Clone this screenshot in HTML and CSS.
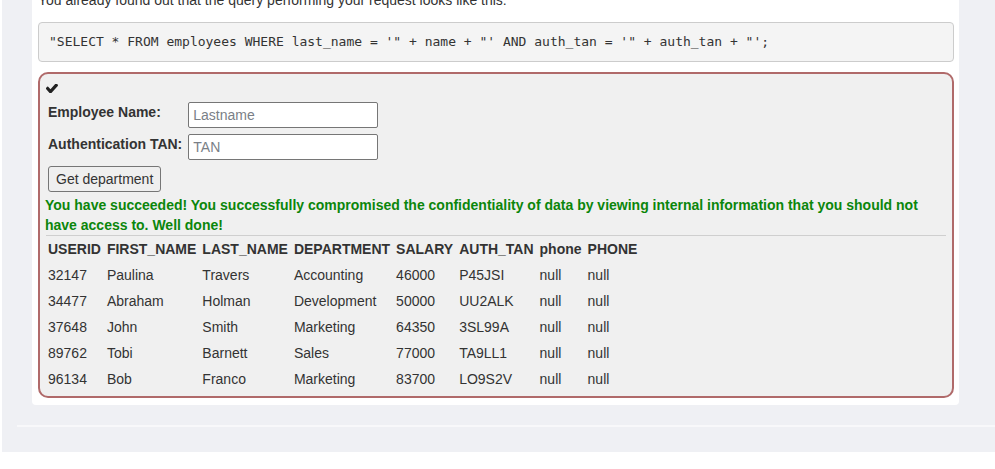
FILE: index.html
```html
<!DOCTYPE html>
<html lang="en">
<head>
<meta charset="utf-8">
<title>SQL Injection</title>
<link rel="stylesheet" href="styles.css">
</head>
<body>
<div class="page">
  <div class="card">
    <p class="intro">You already found out that the query performing your request looks like this:</p>
    <pre class="query">"SELECT * FROM employees WHERE last_name = '" + name + "' AND auth_tan = '" + auth_tan + "';</pre>
    <div class="attack">
      <div class="status">
        <svg class="check" viewBox="143 420 1528 1016" preserveAspectRatio="none" aria-hidden="true"><path d="M1671 566q0 40-28 68l-724 724-136 136q-28 28-68 28t-68-28l-136-136-362-362q-28-28-28-68t28-68l136-136q28-28 68-28t68 28l294 295 656-657q28-28 68-28t68 28l136 136q28 28 28 68z"/></svg>
      </div>
      <table class="form">
        <tr>
          <td class="label">Employee Name:</td>
          <td><input class="field" type="text" placeholder="Lastname"></td>
        </tr>
        <tr>
          <td class="label">Authentication TAN:</td>
          <td><input class="field" type="text" placeholder="TAN"></td>
        </tr>
        <tr>
          <td colspan="2"><button class="btn" type="button">Get department</button></td>
        </tr>
      </table>
      <div class="msg">You have succeeded! You successfully compromised the confidentiality of data by viewing internal information that you should not have access to. Well done!</div>
      <hr class="rule">
      <table class="results">
        <tr><th>USERID</th><th>FIRST_NAME</th><th>LAST_NAME</th><th>DEPARTMENT</th><th>SALARY</th><th>AUTH_TAN</th><th>phone</th><th>PHONE</th></tr>
        <tr><td>32147</td><td>Paulina</td><td>Travers</td><td>Accounting</td><td>46000</td><td>P45JSI</td><td>null</td><td>null</td></tr>
        <tr><td>34477</td><td>Abraham</td><td>Holman</td><td>Development</td><td>50000</td><td>UU2ALK</td><td>null</td><td>null</td></tr>
        <tr><td>37648</td><td>John</td><td>Smith</td><td>Marketing</td><td>64350</td><td>3SL99A</td><td>null</td><td>null</td></tr>
        <tr><td>89762</td><td>Tobi</td><td>Barnett</td><td>Sales</td><td>77000</td><td>TA9LL1</td><td>null</td><td>null</td></tr>
        <tr><td>96134</td><td>Bob</td><td>Franco</td><td>Marketing</td><td>83700</td><td>LO9S2V</td><td>null</td><td>null</td></tr>
      </table>
    </div>
  </div>
  <div class="footer-line"></div>
</div>
</body>
</html>
```
FILE: styles.css
```css
html, body {
  margin: 0;
  padding: 0;
  background: #ffffff;
}
body {
  font-family: "Liberation Sans", Arial, sans-serif;
  font-size: 14px;
  line-height: 20px;
  color: #333333;
  overflow: hidden;
}
.page {
  margin-left: 2px;
  height: 452px;
  background: #eff0f4;
  overflow: hidden;
}
.card {
  margin: -10px 0 20px 30px;
  width: 927px;
  box-sizing: border-box;
  padding: 0 5px 7px 6px;
  background: #ffffff;
  border-radius: 0 0 4px 4px;
}
.intro {
  margin: 0 0 12px;
  line-height: 20px;
}
.query {
  margin: 0 0 10px;
  padding: 9.5px 10px;
  font-family: "DejaVu Sans Mono", monospace;
  font-size: 13px;
  line-height: 18.57px;
  color: #333333;
  background: #f4f4f4;
  border: 1px solid #cccccc;
  border-radius: 4px;
  white-space: pre;
}
.attack {
  border: 2px solid #b06a6a;
  border-radius: 10px;
  background: #f0f0f0;
  padding: 4px 5px 4px 5px;
}
.status {
  height: 21px;
  position: relative;
}
.check {
  position: absolute;
  left: 1px;
  top: 6px;
  width: 12px;
  height: 9px;
  fill: #222222;
}
.form {
  border-collapse: separate;
  border-spacing: 0;
}
.form td {
  padding: 3px;
  vertical-align: top;
}
.form .label {
  font-weight: bold;
  line-height: 20px;
  padding-top: 3px;
}
.field {
  display: block;
  width: 190px;
  height: 26px;
  box-sizing: border-box;
  margin: 0;
  padding: 1px 4px;
  font-family: "Liberation Sans", Arial, sans-serif;
  font-size: 14px;
  color: #333333;
  background: #ffffff;
  border: 1px solid #767676;
  border-radius: 2px;
}
.field::placeholder {
  color: #7a7f87;
}
.btn {
  display: block;
  height: 26px;
  box-sizing: border-box;
  padding: 0 7px;
  font-family: "Liberation Sans", Arial, sans-serif;
  font-size: 14px;
  color: #333333;
  background: #efefef;
  border: 1px solid #767676;
  border-radius: 3px;
}
.msg {
  font-weight: bold;
  color: #0b860b;
  line-height: 20px;
  padding-right: 26px;
}
.rule {
  margin: 0 1px;
  height: 0;
  border: 0;
  border-top: 1px solid #cfcfcf;
}
.results {
  border-collapse: separate;
  border-spacing: 0;
}
.results th,
.results td {
  padding: 3px;
  text-align: left;
  line-height: 20px;
  white-space: nowrap;
}
.results th {
  font-weight: bold;
}
.footer-line {
  margin-left: 15px;
  height: 0;
  border-top: 2px solid #f8f8fa;
}
```
